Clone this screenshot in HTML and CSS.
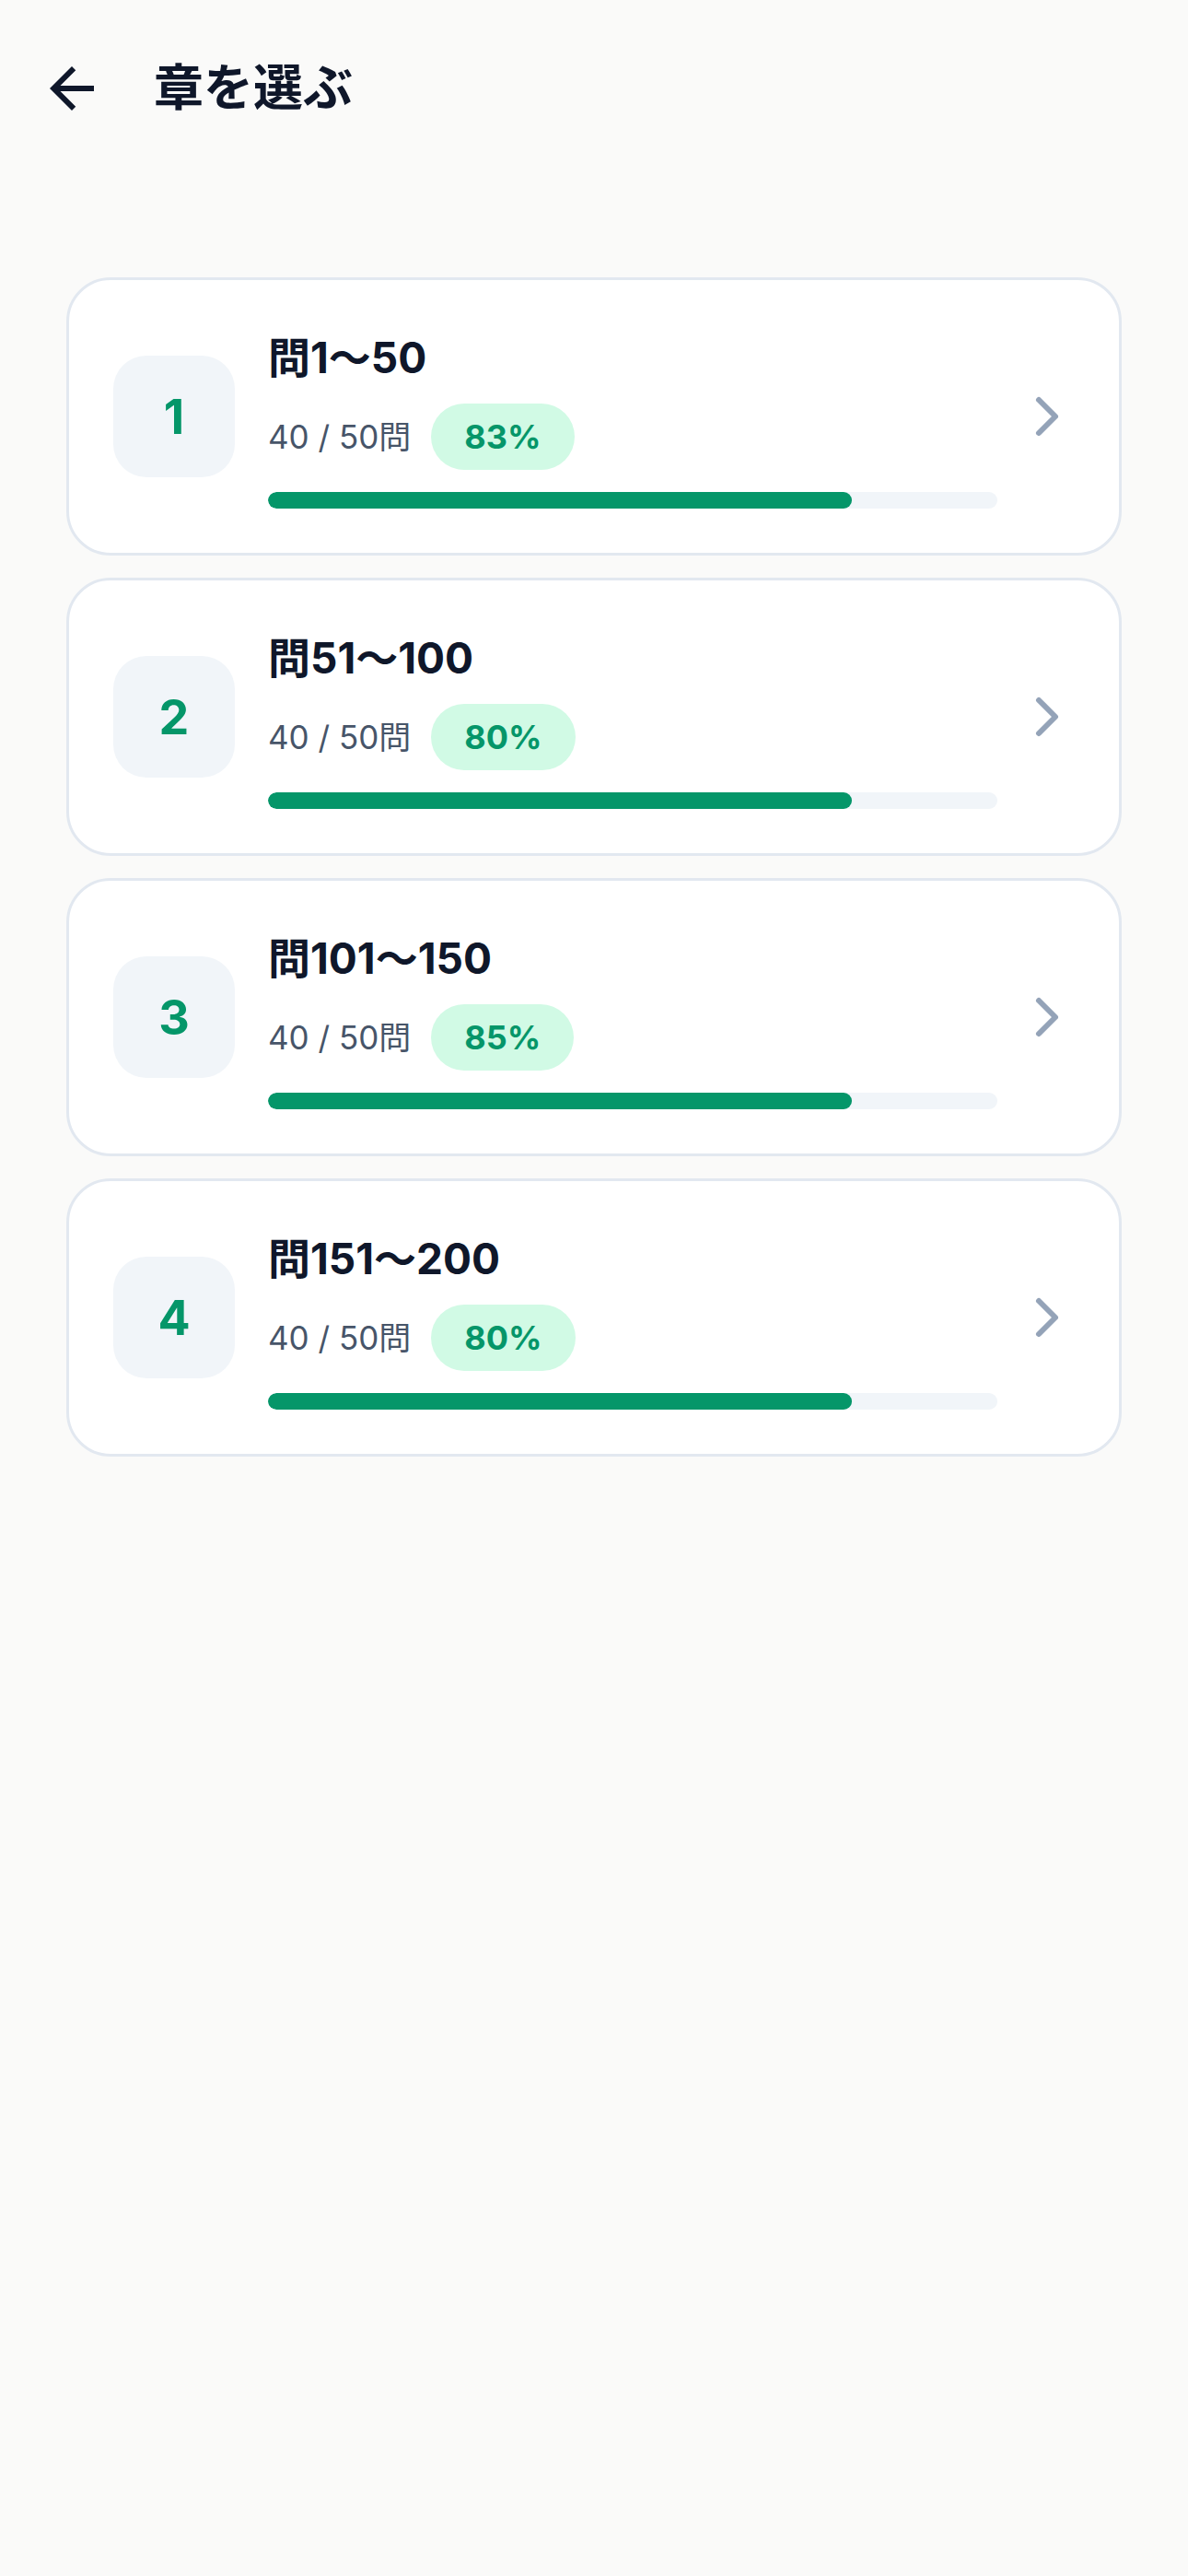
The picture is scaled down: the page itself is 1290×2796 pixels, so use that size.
FILE: index.html
```html
<!DOCTYPE html>
<html lang="ja">
<head>
<meta charset="utf-8">
<title>章を選ぶ</title>
<link rel="stylesheet" href="styles.css">
</head>
<body>
<header class="topbar">
  <svg class="back" viewBox="0 0 24 24" width="72" height="72" aria-hidden="true"><path d="M20 11H7.83l5.59-5.59L12 4l-8 8 8 8 1.41-1.41L7.83 13H20v-2z" fill="#0f172a"/></svg>
  <h1 class="page-title">章を選ぶ</h1>
</header>
<main class="list">
  <div class="card">
    <div class="num">1</div>
    <div class="info">
      <div class="title">問1〜50</div>
      <div class="meta"><span class="count">40 / 50問</span><span class="badge">83%</span></div>
      <div class="track"><div class="fill" style="width:80%"></div></div>
    </div>
    <svg class="chev" viewBox="0 0 24 24" width="72" height="72" aria-hidden="true"><path d="m9 18 6-6-6-6" fill="none" stroke="#94a3b8" stroke-width="2" stroke-linecap="round" stroke-linejoin="round"/></svg>
  </div>
  <div class="card">
    <div class="num">2</div>
    <div class="info">
      <div class="title">問51〜100</div>
      <div class="meta"><span class="count">40 / 50問</span><span class="badge">80%</span></div>
      <div class="track"><div class="fill" style="width:80%"></div></div>
    </div>
    <svg class="chev" viewBox="0 0 24 24" width="72" height="72" aria-hidden="true"><path d="m9 18 6-6-6-6" fill="none" stroke="#94a3b8" stroke-width="2" stroke-linecap="round" stroke-linejoin="round"/></svg>
  </div>
  <div class="card">
    <div class="num">3</div>
    <div class="info">
      <div class="title">問101〜150</div>
      <div class="meta"><span class="count">40 / 50問</span><span class="badge">85%</span></div>
      <div class="track"><div class="fill" style="width:80%"></div></div>
    </div>
    <svg class="chev" viewBox="0 0 24 24" width="72" height="72" aria-hidden="true"><path d="m9 18 6-6-6-6" fill="none" stroke="#94a3b8" stroke-width="2" stroke-linecap="round" stroke-linejoin="round"/></svg>
  </div>
  <div class="card">
    <div class="num">4</div>
    <div class="info">
      <div class="title">問151〜200</div>
      <div class="meta"><span class="count">40 / 50問</span><span class="badge">80%</span></div>
      <div class="track"><div class="fill" style="width:80%"></div></div>
    </div>
    <svg class="chev" viewBox="0 0 24 24" width="72" height="72" aria-hidden="true"><path d="m9 18 6-6-6-6" fill="none" stroke="#94a3b8" stroke-width="2" stroke-linecap="round" stroke-linejoin="round"/></svg>
  </div>
</main>
</body>
</html>
```
FILE: styles.css
```css
html, body {
  margin: 0;
  padding: 0;
}
body {
  background: #fafaf9;
  font-family: Inter, "Noto Sans CJK JP", sans-serif;
  color: #0f172a;
  width: 1290px;
  min-height: 2796px;
}
.topbar {
  height: 192px;
  display: flex;
  align-items: center;
  padding-left: 42px;
}
.back {
  flex: none;
  display: block;
}
.page-title {
  margin: 0 0 0 53px;
  font-size: 54px;
  font-weight: 700;
  line-height: 72px;
  color: #0f172a;
}
.list {
  margin-top: 109px;
  padding: 0 72px;
  display: flex;
  flex-direction: column;
  gap: 24px;
}
.card {
  background: #ffffff;
  border: 3px solid #e2e8f0;
  border-radius: 48px;
  padding: 48px 42px 48px 48px;
  display: flex;
  align-items: center;
}
.num {
  flex: none;
  width: 132px;
  height: 132px;
  border-radius: 36px;
  background: #f1f5f9;
  color: #059669;
  font-size: 52px;
  font-weight: 700;
  display: flex;
  align-items: center;
  justify-content: center;
}
.info {
  flex: 1;
  margin-left: 36px;
  display: flex;
  flex-direction: column;
}
.title {
  font-size: 46px;
  font-weight: 700;
  line-height: 72px;
  color: #0f172a;
  margin-bottom: 14px;
}
.meta {
  display: flex;
  align-items: center;
  gap: 22px;
}
.count {
  font-size: 35px;
  color: #475569;
  line-height: 48px;
}
.badge {
  background: #d1fae5;
  color: #059669;
  font-size: 36px;
  font-weight: 700;
  line-height: 48px;
  padding: 12px 36px;
  border-radius: 999px;
}
.track {
  margin-top: 24px;
  height: 18px;
  border-radius: 9px;
  background: #f1f5f9;
  overflow: hidden;
}
.fill {
  height: 100%;
  background: #059669;
  border-radius: 9px;
}
.chev {
  flex: none;
  display: block;
  margin-left: 18px;
}
```
